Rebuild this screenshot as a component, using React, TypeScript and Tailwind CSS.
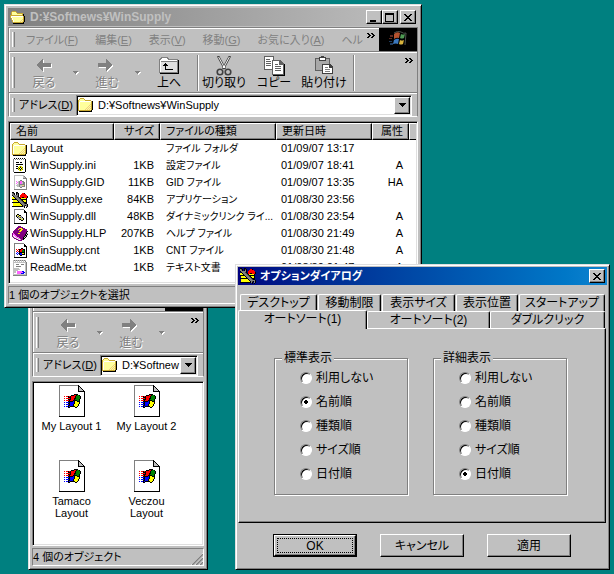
import type { ReactNode } from 'react';

const raised = 'border border-t-white border-l-white border-r-black border-b-black shadow-[inset_-1px_-1px_0_#808080]';
const sunken = 'border border-t-[#808080] border-l-[#808080] border-r-white border-b-white shadow-[inset_1px_1px_0_#000,inset_-1px_-1px_0_#dfdfdf]';
const windowFrame = 'border border-t-[#dfdfdf] border-l-[#dfdfdf] border-r-black border-b-black shadow-[inset_1px_1px_0_#fff,inset_-1px_-1px_0_#808080] bg-[#c0c0c0]';
const embossed = 'text-[#808080] [text-shadow:1px_1px_0_#fff]';

const palette: Record<string, string> = {
  k: '#000000',
  w: '#ffffff',
  g: '#808080',
  s: '#c0c0c0',
  y: '#ffff00',
  Y: '#ffff9c',
  o: '#f0d080',
  r: '#ff0000',
  b: '#0000ff',
  n: '#008000',
  p: '#800080',
  P: '#ff60ff',
  d: '#404040',
  a: '#808000',
  c: '#c8a830',
};

const bitmaps = {
  folder: [
    '..cccc..........',
    '.cYYYYc.........',
    'cYYYYYYcccccc...',
    'cYwwwwwwwwwwwck.',
    'cwYYYYYYYYYYYck.',
    'cwYYYYYYYYYYYck.',
    'cwYYYYYYYYYYock.',
    'cwYYYYYYYYYoYck.',
    'cwYYYYYYYYoYock.',
    'cwYYYYYYYoYoYck.',
    'cwYYYYYYoYoYock.',
    'cwYYYYYoYoYoYck.',
    'ccccccccccccck..',
    '.kkkkkkkkkkkkk..',
  ],
  openFolder: [
    '..cccc..........',
    '.cYYYYc.........',
    '.cYYYYYcccccc...',
    '.cYYYYYYYYYYck..',
    'ccccccccccccck..',
    'cwwwwwwwwwwwwck.',
    'cwYYYYYYYYYYYck.',
    '.cwYYYYYYYYYYck.',
    '.cwYYYYYYYYYock.',
    '..cwYYYYYYYoYck.',
    '..cwYYYYYYoYock.',
    '...cccccccccck..',
    '...kkkkkkkkkkk..',
  ],
  ini: [
    '..k.k.k.k.k.k...',
    '.gwgwgwgwgwgwk..',
    '.gwwwwwwwwwwwk..',
    '.gwwwwwwwwwwwk..',
    '.gwwkkkwkkwwwk..',
    '.gwwwwwwwwwwwk..',
    '.gwwkkkkkkkwwk..',
    '.gwwwwwwwwwwwk..',
    '.gwwkkwyaywwwk..',
    '.gwwwwaykyawwk..',
    '.gwwkkykwkywwk..',
    '.gwwwwaykyawwk..',
    '.gwwwwwyaywwwk..',
    '.gwwwwwwwwwwwk..',
    '..kkkkkkkkkkk...',
  ],
  gid: [
    '..ssssssssss....',
    '..swwwwwwwwsg...',
    '..swwwwwwwwssg..',
    '..swwwwwwwwgggg.',
    '..swwwwwwwwwwwg.',
    '..swwwwwggwwwwg.',
    '..swPwsgPPggwwg.',
    '..swwPsgPPsggwg.',
    '..swPwsgPPsggwg.',
    '..swwssggggggwg.',
    '..swsssgssoogwg.',
    '..swwssgssgggwg.',
    '..swwwwwggwwwwg.',
    '..swwwwwwwwwwwg.',
    '..ggggggggggggg.',
  ],
  exe: [
    'kk..kk..........',
    'gdk.kdk...rrk...',
    'ggk.kgk..rrrrr..',
    'kgggggk.rrrrrrr.',
    '.kgggdk.rrrrrrrk',
    'yykgggdkrrkkrrrk',
    'yyykgggdkyyyyyk.',
    'kkkkkgggdkkkkkk.',
    '.yyyykgggdkyyyk.',
    '.yyyyykgggdkyyk.',
    'kkkkkkkkgggdkkk.',
    '.yyyyyyykgggdkk.',
    '.yyyyyyyykgggggk',
    '.yyyyyyyyykgdkgk',
    'kkkkkkkkkkkgk.gk',
    '............k.k.',
  ],
  dll: [
    '..gggggggggg....',
    '..gwwwwwwwwwk...',
    '..gwwwwwwwwwkk..',
    '..gwwwwwwwwwkkk.',
    '..gwwwwwwwwwwwk.',
    '..gwwkkwwwwwwwk.',
    '..gwkyskkwwwwwk.',
    '..gwksdysgwwwwk.',
    '..gwwksgdskwwwk.',
    '..gwwwgsysskwwk.',
    '..gwwwwkksykwwk.',
    '..gwwwwwwkkwwwk.',
    '..gwwwwwwwwwwwk.',
    '..gwwwwwwwwwwwk.',
    '..kkkkkkkkkkkkk.',
  ],
  help: [
    '......ppp.......',
    '.....pppppp.....',
    '....pppyyyppp...',
    '...pppyppyypppp.',
    '..ppppppyyppppp.',
    '.ppppppyyppppppk',
    '.pppppppppppppk.',
    'pPppppyyppppppks',
    'pPPppppppppppksk',
    'pwPPpppppppppkk.',
    'pswPPpppppppksk.',
    '.pswsPPppppksk..',
    '..ppswsPpppkk...',
    '....ppswsppk....',
    '......pppp......',
  ],
  cnt: [
    '..gggggggggg....',
    '..gwwwwwwwwwk...',
    '..gwwwwwwwwwkk..',
    '..gwwwwwwwwwkkk.',
    '..gwwwwwwwwwwwk.',
    '..gwwwwwwkkwwwk.',
    '..gwrwrkkrrkkwk.',
    '..gwwrwkrrnnkwk.',
    '..gwrwrkrrnnkwk.',
    '..gwwbwkkkkkkwk.',
    '..gwbwbkbbyykwk.',
    '..gwwbwkbbkkkwk.',
    '..gwwwwwkkwwwwk.',
    '..gwwwwwwwwwwwk.',
    '..kkkkkkkkkkkkk.',
  ],
  txt: [
    '.sgsgsgsgsgsgs..',
    '.swswswswswswg..',
    '.sssssssssssssg.',
    '.swwwwwwwwwwwsg.',
    '.swwgggwwgggwsg.',
    '.swwwwwwwwwwwsg.',
    '.swwgggggwwwwsg.',
    '.swwwwwwwwwwwsg.',
    '.sssssswwwwwwsg.',
    '.ssssssswwwwwsg.',
    '.ssssswwwwwwwsg.',
    '.ssswPPPPPbbwsg.',
    '.ssswPPPPPPbbsg.',
    '.swwwPPPPbbbwsg.',
    '.sssssssssssssg.',
    '.gggggggggggggg.',
  ],
  flag: [
    '..........kkkk....',
    '.......kkkrrknnk..',
    'r.rrkrkrrrrknnnnk.',
    '....kkkrrrrknnnnk.',
    'r.rrrrkrrrkknnnnk.',
    '....kkkrrrknnnnk..',
    'r.rrrkrrrkkkknnk..',
    '....kkkkkbkyykkk..',
    'b.bbbkbbbbkyyyyk..',
    '....kkbbbbkyyyyk..',
    'b.bbbkbbbkyyyyk...',
    '....kkbbbkyyyyk...',
    'b.bbkbkkkkkyyk....',
    '....kk.....kk.....',
  ],
};

type BitmapName = keyof typeof bitmaps;

function Bitmap({ name }: { name: BitmapName }) {
  const rows = bitmaps[name];
  const width = rows[0].length;
  return (
    <svg width={width} height={rows.length} viewBox={`0 0 ${width} ${rows.length}`} shapeRendering="crispEdges" className="block shrink-0" aria-hidden="true">
      {rows.flatMap((row, y) =>
        row.split('').map((c, x) =>
          palette[c] ? <rect key={`${x}-${y}`} x={x} y={y} width="1" height="1" fill={palette[c]} /> : null
        )
      )}
    </svg>
  );
}

function DocumentIcon() {
  return (
    <svg width="26" height="32" viewBox="0 0 26 32" shapeRendering="crispEdges" className="block" aria-hidden="true">
      <path d="M0 0H20V1H1V31H0Z" fill="#808080" />
      <path d="M1 1H19V7H25V31H1Z" fill="#fff" />
      <path d="M25 6H26V32H0V31H25Z" fill="#000" />
      <path d="M19 0H20V1H21V2H22V3H23V4H24V5H25V6H26V7H19Z" fill="#000" />
      <path d="M20 2H21V3H22V4H23V5H24V6H20Z" fill="#c0c0c0" />
      <svg x="5" y="9" width="18" height="14" viewBox="0 0 18 14">
        <Bitmap name="flag" />
      </svg>
    </svg>
  );
}

function Throbber() {
  return (
    <div className="w-[38px] self-stretch bg-black flex items-center justify-center shrink-0">
      <svg width="20" height="17" viewBox="0 0 20 17" aria-hidden="true">
        <path d="M6 3Q9 0 12 2L11 7Q9 6 6 8Z" fill="#b5532f" />
        <path d="M13 3Q15 4 17 3L16 7Q14 8 12 7Z" fill="#4f9a54" />
        <path d="M6 9Q9 7 11 8L10 13Q8 12 5 13Z" fill="#3b78bd" />
        <path d="M12 9Q14 10 16 9L15 13Q13 14 11 13Z" fill="#d8b33c" />
        <path d="M2 4h3v2H2zM1 7h3v1H1z" fill="#5b2a20" />
        <path d="M1 10h3v1H1zM2 12h3v2H2z" fill="#1f3b5c" />
        <path d="M6 2Q10 -1 13 1T18 2L17 14" fill="none" stroke="#4c524c" />
      </svg>
    </div>
  );
}

function ArrowIcon({ forward = false }: { forward?: boolean }) {
  const d = forward ? 'M0 5H8V1L15 7L8 13V9H0Z' : 'M16 5H8V1L1 7L8 13V9H16Z';
  return (
    <svg width="18" height="16" viewBox="0 0 18 16" shapeRendering="crispEdges" aria-hidden="true">
      <path d={d} fill="#fff" transform="translate(1 1)" />
      <path d={d} fill="#808080" />
    </svg>
  );
}

function UpIcon() {
  return (
    <svg width="20" height="17" viewBox="0 0 20 17" shapeRendering="crispEdges" aria-hidden="true">
      <path d="M0 2L2 0H8L10 2H19V16H0Z" fill="#808080" />
      <path d="M1 3L3 1H7L9 3H18V4H1Z" fill="#fff" />
      <path d="M1 5H18V15H1Z" fill="#dfdfdf" />
      <path d="M1 4H2V15H1Z" fill="#fff" />
      <path d="M19 3H20V17H1V16H19Z" fill="#000" />
      <path d="M6 6H7V7H8V8H9V9H7V12H14V13H6V9H4V8H5V7H6Z" fill="#000" />
    </svg>
  );
}

function CutIcon() {
  return (
    <svg width="16" height="20" viewBox="0 0 16 20" aria-hidden="true">
      <path d="M2 0L9 13M14 0L7 13" stroke="#404040" strokeWidth="2.4" />
      <path d="M2.6 1L8 11M13.4 1L8 11" stroke="#fff" strokeWidth="0.9" />
      <circle cx="4" cy="16" r="2.8" fill="none" stroke="#404040" strokeWidth="1.6" />
      <circle cx="12" cy="16" r="2.8" fill="none" stroke="#404040" strokeWidth="1.6" />
      <path d="M7 10h2v2H7z" fill="#fff" />
    </svg>
  );
}

function CopyIcon() {
  return (
    <svg width="21" height="20" viewBox="0 0 21 20" shapeRendering="crispEdges" aria-hidden="true">
      <path d="M0 0H10V14H0Z" fill="#606060" />
      <path d="M1 1H9V13H1Z" fill="#fff" />
      <path d="M2 3H6V4H2ZM2 5H7V6H2ZM2 7H7V8H2ZM2 9H7V10H2Z" fill="#606060" />
      <path d="M8 4H16L20 8V19H8Z" fill="#606060" />
      <path d="M9 5H15V9H19V18H9Z" fill="#fff" />
      <path d="M11 8H14V9H11ZM11 10H17V11H11ZM11 12H17V13H11ZM11 14H17V15H11Z" fill="#606060" />
      <path d="M20 8H21V20H9V19H20Z" fill="#000" />
    </svg>
  );
}

function PasteIcon() {
  return (
    <svg width="20" height="19" viewBox="0 0 20 19" shapeRendering="crispEdges" aria-hidden="true">
      <path d="M1 2H16V15H1Z" fill="#606060" />
      <path d="M2 3H15V14H2Z" fill="#a8a8a8" />
      <path d="M5 1H7V0H10V1H12V5H5Z" fill="#404040" />
      <path d="M6 2H11V4H6Z" fill="#fff" />
      <path d="M8 8H16L19 11V18H8Z" fill="#404040" />
      <path d="M9 9H15V12H18V17H9Z" fill="#fff" />
      <path d="M11 11H14V12H11ZM11 13H16V14H11ZM11 15H16V16H11Z" fill="#808080" />
    </svg>
  );
}

function Chevron() {
  return (
    <svg width="8" height="5" viewBox="0 0 8 5" shapeRendering="crispEdges" className="block" aria-hidden="true">
      <path d="M0 0h2v1h1v1h1v1h-1v1h-1v1h-2v-1h1v-1h1v-1h-1v-1h-1zM4 0h2v1h1v1h1v1h-1v1h-1v1h-2v-1h1v-1h1v-1h-1v-1h-1z" fill="#000" />
    </svg>
  );
}

function DropArrow() {
  return (
    <svg width="6" height="4" viewBox="0 0 6 4" shapeRendering="crispEdges" aria-hidden="true">
      <path d="M1 1h5v1h-1v1h-1v1h-1v-1h-1v-1h-1z" fill="#fff" />
      <path d="M0 0h5v1h-1v1h-1v1h-1v-1h-1v-1h-1z" fill="#808080" />
    </svg>
  );
}

function CaptionButton({ label, children }: { label: string; children: ReactNode }) {
  return (
    <button aria-label={label} className={`w-4 h-[14px] bg-[#c0c0c0] flex items-center justify-center ${raised}`}>
      <svg width="10" height="9" viewBox="0 0 10 9" shapeRendering="crispEdges" aria-hidden="true">{children}</svg>
    </button>
  );
}

const closeGlyph = <path d="M1 1h2v1h1v1h2v-1h1v-1h2v1h-1v1h-1v1h-1v1h1v1h1v1h1v1h-2v-1h-1v-1h-2v1h-1v1h-2v-1h1v-1h1v-1h1v-1h-1v-1h-1v-1h-1z" fill="#000" />;

function Grip() {
  return <div className="w-[3px] self-stretch my-1 ml-[3px] border-l border-l-white border-r border-r-[#808080] shrink-0" />;
}

function ToolButton({ icon, label, className, disabled = false }: { icon: ReactNode; label: string; className: string; disabled?: boolean }) {
  return (
    <button disabled={disabled} className={`flex flex-col items-center shrink-0 text-[12px] leading-[14px] ${disabled ? embossed : 'text-black'} ${className}`}>
      <span className="h-[20px] flex items-center">{icon}</span>
      <span className="whitespace-nowrap">{label}</span>
    </button>
  );
}

type ExplorerProps = {
  className: string;
  title: string;
  menus: { label: string; accessKey?: string }[];
  address: string;
  status: string;
  wide?: boolean;
  children: ReactNode;
};

function ExplorerWindow({ className, title, menus, address, status, wide = false, children }: ExplorerProps) {
  return (
    <section className={`absolute p-[3px] flex flex-col ${windowFrame} ${className}`}>
      {/* Title bar */}
      <header className="h-[18px] shrink-0 flex items-center gap-1 pr-[2px] bg-linear-to-r from-[#808080] to-[#c0c0c0]">
        <span className="pl-[2px]"><Bitmap name="openFolder" /></span>
        <h1 className="flex-1 text-[12px] leading-[16px] font-bold text-[#c0c0c0] truncate">{title}</h1>
        <div className="flex">
          <CaptionButton label="最小化"><path d="M1 7h6v2h-6z" fill="#000" /></CaptionButton>
          <CaptionButton label="最大化"><path d="M0 0h9v9h-9zM1 2v6h7v-6z" fillRule="evenodd" fill="#000" /></CaptionButton>
        </div>
        <div className="-ml-[2px]">
          <CaptionButton label="閉じる">{closeGlyph}</CaptionButton>
        </div>
      </header>

      {/* Menu, tool and address bands */}
      <div className="mt-[1px] shrink-0 border border-[#808080] border-b-white shadow-[inset_1px_1px_0_#fff]">
        <div className="h-6 flex items-center border-b border-[#808080] overflow-hidden">
          <Grip />
          <nav className="flex-1 min-w-0 flex items-center gap-[17px] pl-[11px] overflow-hidden text-[11px] leading-[16px] text-[#808080] whitespace-nowrap">
            {menus.map((menu) => (
              <button key={menu.label} className="shrink-0">
                {menu.label}
                {menu.accessKey && <>(<u>{menu.accessKey}</u>)</>}
              </button>
            ))}
          </nav>
          <span className="self-start pt-[5px] px-1"><Chevron /></span>
          <Throbber />
        </div>

        <div className="h-[41px] flex items-center border-t border-t-white border-b border-b-[#808080]">
          <Grip />
          <div className="flex-1 min-w-0 flex items-center pl-1">
            <ToolButton icon={<ArrowIcon />} label="戻る" disabled className="w-[50px]" />
            <span className="w-[14px] flex justify-center"><DropArrow /></span>
            <ToolButton icon={<ArrowIcon forward />} label="進む" disabled className="w-12" />
            <span className="w-[14px] flex justify-center"><DropArrow /></span>
            {wide && (
              <>
                <ToolButton icon={<UpIcon />} label="上へ" className="w-12" />
                <div className="w-[2px] h-9 ml-1 bg-[#808080] border-r border-white" />
                <ToolButton icon={<CutIcon />} label="切り取り" className="w-[50px]" />
                <ToolButton icon={<CopyIcon />} label="コピー" className="w-[50px]" />
                <ToolButton icon={<PasteIcon />} label="貼り付け" className="w-[50px]" />
                <div className="w-[2px] h-9 ml-1 bg-[#808080] border-r border-white" />
              </>
            )}
          </div>
          <span className="self-start pt-[5px] pr-1"><Chevron /></span>
        </div>

        <div className="h-[23px] flex items-center border-t border-t-white pr-[5px]">
          <Grip />
          <label className="flex-1 min-w-0 flex items-center">
            <span className="w-[61px] shrink-0 pl-1 text-[11px] leading-[16px] whitespace-nowrap">アドレス(<u>D</u>)</span>
            <span className={`flex-1 min-w-0 h-[21px] p-[1px] flex items-center bg-white ${sunken}`}>
              <Bitmap name="folder" />
              <select className="flex-1 min-w-0 h-4 pl-1 appearance-none bg-white text-[11px] leading-[16px]">
                <option>{address}</option>
              </select>
              <span className={`w-4 self-stretch shrink-0 flex items-center justify-center bg-[#c0c0c0] ${raised}`}>
                <svg width="7" height="4" viewBox="0 0 7 4" shapeRendering="crispEdges" aria-hidden="true">
                  <path d="M0 0h7v1h-1v1h-1v1h-1v1h-1v-1h-1v-1h-1v-1h-1z" fill="#000" />
                </svg>
              </span>
            </span>
          </label>
        </div>
      </div>

      <div className={`mt-1 flex-1 min-h-0 p-[1px] bg-white overflow-hidden ${sunken}`}>{children}</div>

      {/* Status bar */}
      <footer className="relative mt-[2px] h-[18px] shrink-0 border border-t-[#808080] border-l-[#808080] border-r-white border-b-white text-[11px] leading-[16px]">
        {status}
        <svg width="12" height="12" viewBox="0 0 12 12" className="absolute right-0 bottom-0" aria-hidden="true">
          <path d="M0 12L12 0M4 12L12 4M8 12L12 8" stroke="#fff" />
          <path d="M1 12L12 1M5 12L12 5M9 12L12 9" stroke="#808080" strokeWidth="1.5" />
        </svg>
      </footer>
    </section>
  );
}

function FileTable() {
  const files: { icon: BitmapName; name: string; size: string; kind: string; date: string; attr: string }[] = [
    { icon: 'folder', name: 'Layout', size: '', kind: 'ファイル フォルダ', date: '01/09/07 13:17', attr: '' },
    { icon: 'ini', name: 'WinSupply.ini', size: '1KB', kind: '設定ファイル', date: '01/09/07 18:41', attr: 'A' },
    { icon: 'gid', name: 'WinSupply.GID', size: '11KB', kind: 'GID ファイル', date: '01/09/07 13:35', attr: 'HA' },
    { icon: 'exe', name: 'WinSupply.exe', size: '84KB', kind: 'アプリケーション', date: '01/08/30 23:56', attr: '' },
    { icon: 'dll', name: 'WinSupply.dll', size: '48KB', kind: 'ダイナミックリンク ライ...', date: '01/08/30 23:54', attr: 'A' },
    { icon: 'help', name: 'WinSupply.HLP', size: '207KB', kind: 'ヘルプ ファイル', date: '01/08/30 21:49', attr: 'A' },
    { icon: 'cnt', name: 'WinSupply.cnt', size: '1KB', kind: 'CNT ファイル', date: '01/08/30 21:48', attr: 'A' },
    { icon: 'txt', name: 'ReadMe.txt', size: '1KB', kind: 'テキスト文書', date: '01/08/30 21:47', attr: 'A' },
  ];
  const head = `h-[17px] p-0 px-[5px] bg-[#c0c0c0] font-normal ${raised}`;

  return (
    <table className="w-full table-fixed border-separate border-spacing-0 text-[11px] leading-[15px] whitespace-nowrap">
      <thead>
        <tr>
          <th className={`w-[104px] text-left ${head}`}>名前</th>
          <th className={`w-[46px] text-right ${head}`}>サイズ</th>
          <th className={`w-[116px] text-left ${head}`}>ファイルの種類</th>
          <th className={`w-[96px] text-left ${head}`}>更新日時</th>
          <th className={`w-[37px] text-right ${head}`}>属性</th>
          <th className="p-0 bg-[#c0c0c0] border-t border-l border-white border-b border-b-black" />
        </tr>
      </thead>
      <tbody>
        {files.map((file) => (
          <tr key={file.name}>
            <td className="h-[17px] p-0 pl-[2px]">
              <div className="flex items-center gap-[2px]">
                <span className="h-4 flex items-center"><Bitmap name={file.icon} /></span>
                {file.name}
              </div>
            </td>
            <td className="p-0 pr-[6px] text-right">{file.size}</td>
            <td className="p-0 pl-[6px] text-[10px]">{file.kind}</td>
            <td className="p-0 pl-[5px]">{file.date}</td>
            <td className="p-0 pr-[6px] text-right">{file.attr}</td>
            <td className="p-0" />
          </tr>
        ))}
      </tbody>
    </table>
  );
}

function Tab({ label, className, selected = false }: { label: string; className: string; selected?: boolean }) {
  return (
    <button
      role="tab"
      aria-selected={selected}
      className={`rounded-t-[2px] border-t border-l border-white border-r border-r-black bg-[#c0c0c0] shadow-[inset_-1px_0_0_#808080] text-[12px] leading-[16px] whitespace-nowrap ${className}`}
    >
      {label}
    </button>
  );
}

function SortGroup({ legend, name, value }: { legend: string; name: string; value: string }) {
  const options = ['利用しない', '名前順', '種類順', 'サイズ順', '日付順'];

  return (
    <fieldset className="w-[134px] pl-[25px] pb-2 border border-[#808080] shadow-[1px_1px_0_#fff,inset_1px_1px_0_#fff] text-[12px] leading-[16px]">
      <legend className="-ml-[18px] px-[2px] bg-[#c0c0c0]">{legend}</legend>
      {options.map((option) => (
        <label key={option} className="h-6 flex items-center gap-1">
          <input
            type="radio"
            name={name}
            defaultChecked={option === value}
            className="w-3 h-3 appearance-none rounded-full bg-white border border-t-[#808080] border-l-[#808080] border-r-white border-b-white shadow-[inset_1px_1px_0_#000] checked:bg-[radial-gradient(circle,#000_2px,#fff_2px)]"
          />
          {option}
        </label>
      ))}
    </fieldset>
  );
}

function OptionDialog() {
  return (
    <section role="dialog" aria-label="オプションダイアログ" className={`absolute left-[235px] top-[264px] w-[375px] h-[306px] p-[2px] flex flex-col ${windowFrame}`}>
      <header className="h-[18px] shrink-0 flex items-center gap-1 pl-[2px] pr-[2px] bg-linear-to-r from-[#000080] to-[#1084d0]">
        <Bitmap name="exe" />
        <h2 className="flex-1 text-[11px] leading-[16px] font-bold text-white">オプションダイアログ</h2>
        <CaptionButton label="閉じる">{closeGlyph}</CaptionButton>
      </header>

      <div role="tablist" className="mt-[9px] pr-[2px]">
        <div className="flex gap-[1px] pl-[2px] h-[17px]">
          <Tab label="デスクトップ" className="w-[77px]" />
          <Tab label="移動制限" className="w-[63px]" />
          <Tab label="表示サイズ" className="w-[73px]" />
          <Tab label="表示位置" className="w-[62px]" />
          <Tab label="スタートアップ" className="flex-1" />
        </div>
        <div className="flex h-[17px]">
          <Tab label="オートソート(1)" selected className="relative w-[129px] h-[19px] -mt-[1px] pb-[3px]" />
          <Tab label="オートソート(2)" className="w-[123px]" />
          <Tab label="ダブルクリック" className="flex-1" />
        </div>
      </div>

      <div role="tabpanel" className="h-[195px] mr-[1px] pt-[21px] pl-[35px] flex items-start gap-[25px] border border-white border-r-black border-b-black shadow-[inset_-1px_-1px_0_#808080]">
        <SortGroup legend="標準表示" name="standard" value="名前順" />
        <SortGroup legend="詳細表示" name="detail" value="日付順" />
      </div>

      <div className="flex gap-[23px] pt-[11px] pl-[35px] text-[12px] leading-[16px]">
        <button className="w-[84px] h-[23px] p-[1px] bg-black">
          <span className={`block h-full p-[2px] bg-[#c0c0c0] ${raised}`}>
            <span className="flex h-full items-center justify-center border border-dotted border-black">OK</span>
          </span>
        </button>
        <button className={`w-[84px] h-[23px] ${raised}`}>キャンセル</button>
        <button className={`w-[84px] h-[23px] ${raised}`}>適用</button>
      </div>
    </section>
  );
}

export default function App() {
  const menus = [
    { label: 'ファイル', accessKey: 'F' },
    { label: '編集', accessKey: 'E' },
    { label: '表示', accessKey: 'V' },
    { label: '移動', accessKey: 'G' },
    { label: 'お気に入り', accessKey: 'A' },
    { label: 'ヘル' },
  ];
  const layouts = ['My Layout 1', 'My Layout 2', 'Tamaco Layout', 'Veczou Layout'];

  return (
    <main className="relative min-h-screen overflow-hidden bg-[#008080] text-black font-['Liberation_Sans','Noto_Sans_CJK_JP',sans-serif] [font-feature-settings:'palt']">
      <ExplorerWindow className="left-7 top-[264px] w-[180px] h-[306px]" title="" menus={[]} address="D:¥Softnew" status="4 個のオブジェクト">
        <ul className="flex flex-wrap pt-[2px]">
          {layouts.map((layout) => (
            <li key={layout} className="w-[75px] h-[75px] px-1 flex flex-col items-center gap-[3px] text-center text-[11px] leading-[12px]">
              <DocumentIcon />
              <span>{layout}</span>
            </li>
          ))}
        </ul>
      </ExplorerWindow>

      <ExplorerWindow className="left-1 top-1 w-[418px] h-[304px]" title="D:¥Softnews¥WinSupply" menus={menus} address="D:¥Softnews¥WinSupply" status="1 個のオブジェクトを選択" wide>
        <FileTable />
      </ExplorerWindow>

      <OptionDialog />
    </main>
  );
}
